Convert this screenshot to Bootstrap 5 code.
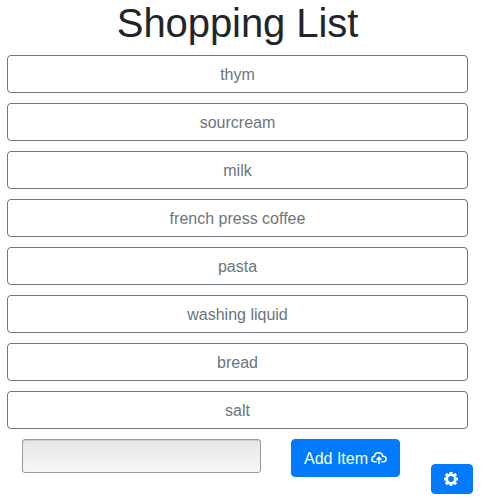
<!DOCTYPE html>
<html lang="en">
<head>
<meta charset="utf-8">
<meta name="viewport" content="width=device-width, initial-scale=1">
<title>Shopping List</title>
<link href="https://cdn.jsdelivr.net/npm/bootstrap@5.3.0/dist/css/bootstrap.min.css" rel="stylesheet">
<style>
body { font-family: "Liberation Sans", Arial, sans-serif; overflow: hidden; }
h1 { font-size: 40px; line-height: 48px; letter-spacing: -.08px; }
.shop-page { width: 461px; margin-left: 7px; margin-top: -1px; }
.shop-items { gap: 10px; margin-top: 8px; }
.btn { --bs-btn-border-radius: 4px; height: 38px; padding-top: 7px; padding-bottom: 5px; }
.btn-primary { --bs-btn-bg: #007bff; --bs-btn-border-color: #007bff; }
.btn-outline-secondary { --bs-btn-color: #6c757d; --bs-btn-border-color: #6c757d; }
.entry-row { margin-top: 10px; padding-left: 15px; gap: 30px; }
.entry-field { width: 239px; height: 34px; border: 1px solid #999; border-radius: 3px; padding: 4px 8px;
  background: linear-gradient(#e6e6e6, #f6f6f6); box-shadow: inset 0 1px 0 rgba(0,0,0,.12); }
.add-btn { width: 109px; }
.add-icon { margin-left: 3px; margin-top: -2px; }
.settings-btn { right: 8px; bottom: 4px; width: 42px; height: 30px; padding: 0 2px 0 0; }
</style>
</head>
<body>
<main class="shop-page">
  <h1 class="text-center mb-0">Shopping List</h1>
  <div class="shop-items d-grid">
    <button class="btn btn-outline-secondary">thym</button>
    <button class="btn btn-outline-secondary">sourcream</button>
    <button class="btn btn-outline-secondary">milk</button>
    <button class="btn btn-outline-secondary">french press coffee</button>
    <button class="btn btn-outline-secondary">pasta</button>
    <button class="btn btn-outline-secondary">washing liquid</button>
    <button class="btn btn-outline-secondary">bread</button>
    <button class="btn btn-outline-secondary">salt</button>
  </div>
  <div class="entry-row d-flex align-items-start">
    <input class="entry-field" type="text" aria-label="New item">
    <button class="add-btn btn btn-primary d-flex align-items-center text-nowrap">Add Item
      <svg class="add-icon flex-shrink-0" width="16" height="14" viewBox="0 0 16 14" fill="none" stroke="#fff" stroke-width="1.5" aria-hidden="true"><path d="M5.8 10.7H3.7C2 10.7.8 9.7.8 8.2c0-1.4 1-2.5 2.6-2.6C3.6 3.1 5.3 1.8 7.6 1.8c2.2 0 3.8 1.2 4.2 3.5 2 .1 3.4 1.1 3.4 2.8 0 1.6-1.2 2.6-3 2.6h-2M8 13V6.4M5.5 8.7 8 6.2l2.5 2.5"/></svg>
    </button>
  </div>
</main>
<button class="settings-btn btn btn-primary position-fixed d-flex align-items-center justify-content-center" aria-label="Settings">
  <svg width="14" height="14" viewBox="0 0 14 14" fill="none" stroke="#fff" aria-hidden="true"><circle cx="7" cy="7" r="4.2" stroke-width="2.6"/><path stroke-width="3" d="M7 0v2.4M7 11.6V14M0 7h2.4M11.6 7H14M1.9 1.9l1.9 1.9M10.2 10.2l1.9 1.9M12.1 1.9l-1.9 1.9M3.8 10.2l-1.9 1.9"/></svg>
</button>
<script src="https://cdn.jsdelivr.net/npm/bootstrap@5.3.0/dist/js/bootstrap.bundle.min.js"></script>
</body>
</html>
